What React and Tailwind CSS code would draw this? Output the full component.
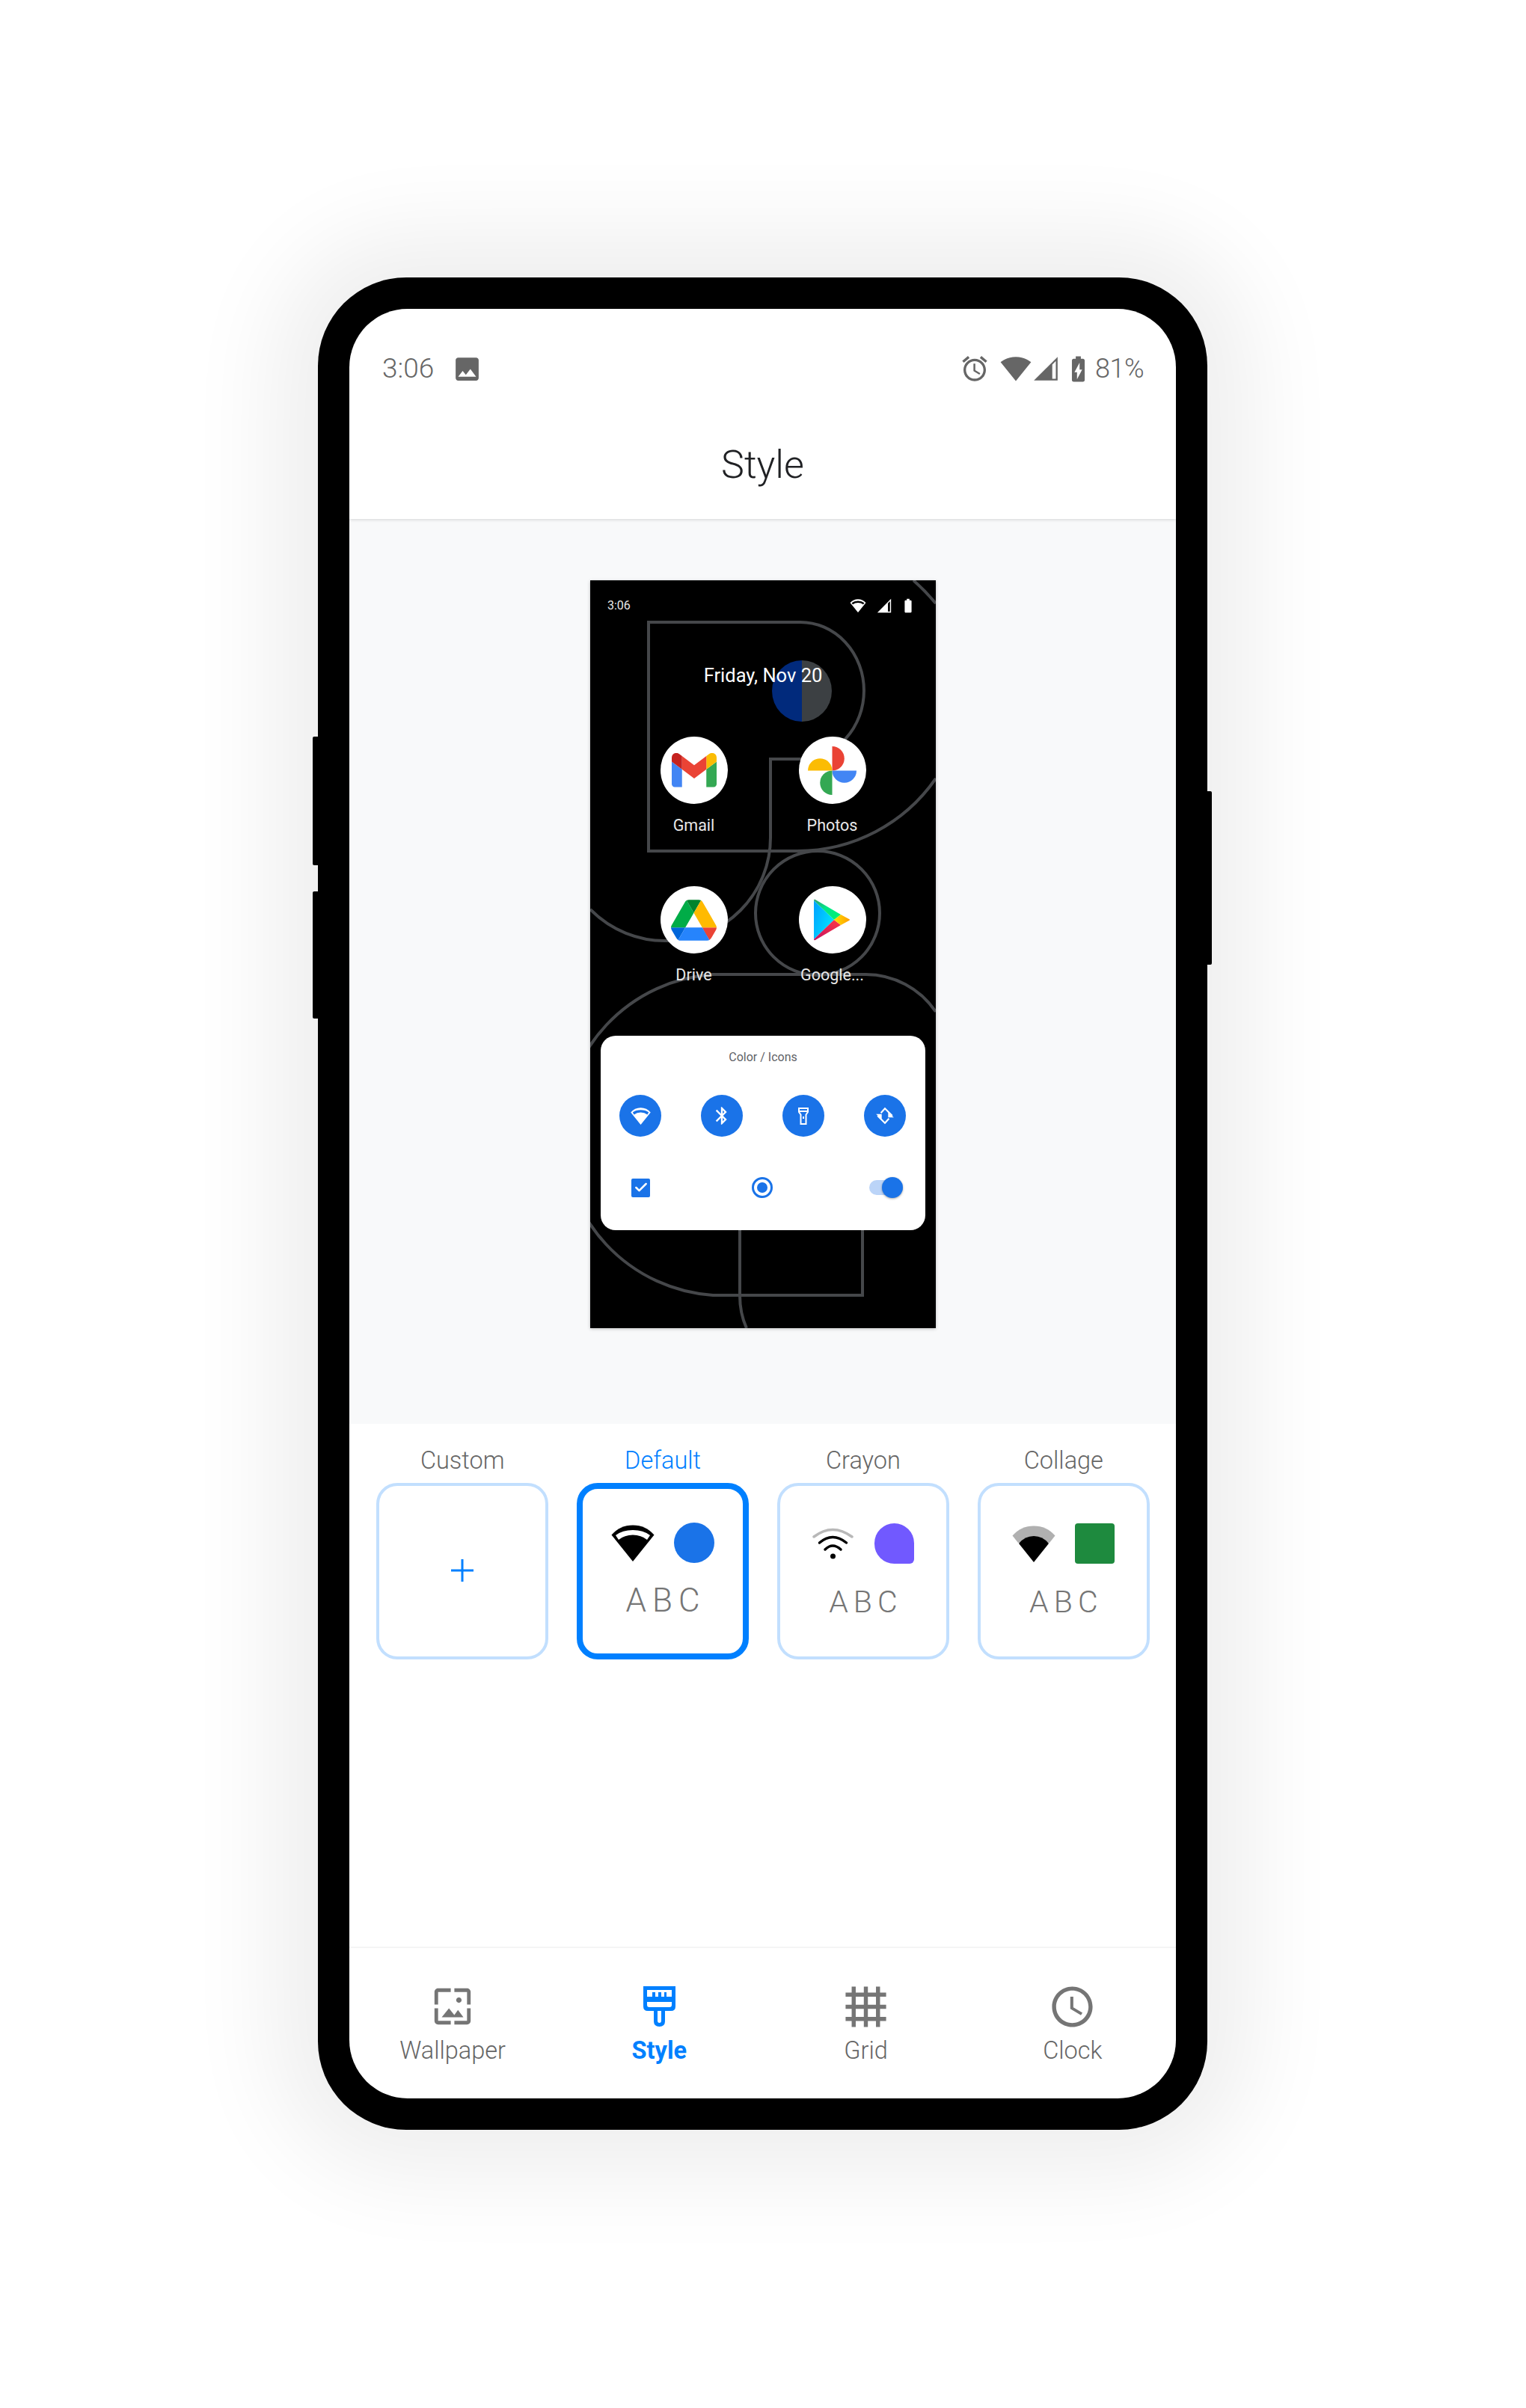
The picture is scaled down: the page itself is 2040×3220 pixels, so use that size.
import { Check } from "lucide-react";

const Wifi = ({ className = "", fill = "#000", cut = "#fff" }) => (
  <svg viewBox="0 0 58 49" className={className}>
    <path fill={fill} d="M29 49 0.5 13.5Q12 0.5 29 0.5Q46 0.5 57.5 13.5Z" />
    <path fill={cut} d="M6 14Q15 7 29 7Q43 7 52 14L48 20Q40 13.5 29 13.5Q18 13.5 10 20Z" />
  </svg>
);

const MdIcon = ({ d, className = "", fill = "currentColor" }) => (
  <svg viewBox="0 0 24 24" className={className} fill={fill}>
    <path d={d} fillRule="evenodd" />
  </svg>
);

const paths = {
  image: "M21 19V5c0-1.1-.9-2-2-2H5c-1.1 0-2 .9-2 2v14c0 1.1.9 2 2 2h14c1.1 0 2-.9 2-2zM8.5 13.5l2.5 3.01L14.5 12l4.5 6H5l3.5-4.5z",
  alarm: "M22 5.72l-4.6-3.86-1.29 1.53 4.6 3.86L22 5.72zM7.88 3.39L6.6 1.86 2 5.71l1.29 1.53 4.59-3.85zM12.5 8H11v6l4.75 2.85.75-1.23-4-2.37V8zM12 4c-4.97 0-9 4.03-9 9s4.02 9 9 9c4.97 0 9-4.03 9-9s-4.03-9-9-9zm0 16c-3.87 0-7-3.13-7-7s3.13-7 7-7 7 3.13 7 7-3.13 7-7 7z",
  wifi: "M12.01 21.49L23.64 7c-.45-.34-4.93-4-11.64-4C5.28 3 .81 6.66.36 7l11.63 14.49.01.01.01-.01z",
  signal: "M22 2L2 22h20V2zM20.5 20.5h-3V8.5l3-3z",
  battery: "M15.67 4H14V2h-4v2H8.33C7.6 4 7 4.6 7 5.33v15.33C7 21.4 7.6 22 8.33 22h7.33c.74 0 1.34-.6 1.34-1.33V5.33C17 4.6 16.4 4 15.67 4zM11 20v-5.5H9L13 7v5.5h2L11 20z",
  batteryFull: "M15.67 4H14V2h-4v2H8.33C7.6 4 7 4.6 7 5.33v15.33C7 21.4 7.6 22 8.33 22h7.33c.74 0 1.34-.6 1.34-1.33V5.33C17 4.6 16.4 4 15.67 4z",
  wallpaper: "M4 4h7V2H4c-1.1 0-2 .9-2 2v7h2V4zm6 9l-4 5h12l-3-4-2.03 2.71L10 13zm7-4.5c0-.83-.67-1.5-1.5-1.5S14 7.67 14 8.5s.67 1.5 1.5 1.5S17 9.33 17 8.5zM20 2h-7v2h7v7h2V4c0-1.1-.9-2-2-2zm0 18h-7v2h7c1.1 0 2-.9 2-2v-7h-2v7zM4 13H2v7c0 1.1.9 2 2 2h7v-2H4v-7z",
  grid: "M22 7V5h-3V2h-2v3h-4V2h-2v3H7V2H5v3H2v2h3v4H2v2h3v4H2v2h3v3h2v-3h4v3h2v-3h4v3h2v-3h3v-2h-3v-4h3v-2h-3V7h3zM7 7h4v4H7V7zm0 10v-4h4v4H7zm10 0h-4v-4h4v4zm0-6h-4V7h4v4z",
  clock: "M11.99 2C6.47 2 2 6.48 2 12s4.47 10 9.99 10C17.52 22 22 17.52 22 12S17.52 2 11.99 2zM12 20c-4.42 0-8-3.58-8-8s3.58-8 8-8 8 3.58 8 8-3.58 8-8 8zm.5-13H11v6l5.25 3.15.75-1.23-4.5-2.67z",
  bluetooth: "M17.71 7.71L12 2h-1v7.59L6.41 5 5 6.41 10.59 12 5 17.59 6.41 19 11 14.41V22h1l5.71-5.71-4.3-4.29 4.3-4.29zM13 5.83l1.88 1.88L13 9.59V5.83zm1.88 10.46L13 18.17v-3.76l1.88 1.88z",
};

const BrushIcon = () => (
  <svg viewBox="0 0 43 54" className="h-[54px] w-[43px]">
    <path
      fill="#0080ff"
      fillRule="evenodd"
      d="M0 0H43V27Q43 33 37 33H29V47Q29 54 21.5 54Q14 54 14 47V33H6Q0 33 0 27ZM5 5V14H12V8H16V14H20V8H24V14H28V8H31V14H38V5ZM5 21V25Q5 28 8 28H35Q38 28 38 25V21ZM19 33V46Q19 49 21.5 49Q24 49 24 46V33Z"
    />
  </svg>
);

const Backdrop = () => (
  <svg viewBox="0 0 462 1000" className="absolute inset-0 h-full w-full" fill="none" stroke="#45474a" strokeWidth="4">
    <path fill="#012a7c" stroke="none" d="M283 107A40 41 0 0 0 283 189Z" />
    <path fill="#3c4043" stroke="none" d="M283 107A40 41 0 0 1 283 189Z" />
    <path d="M432 0Q448 14 462 31" />
    <path d="M281 239A85 91.5 0 0 0 281 56H78V362H277A225 225 0 0 0 462 265" />
    <path d="M281 239H241V344A138 138 0 0 1 104 482A140 140 0 0 1 0 440" />
    <circle cx="304" cy="445" r="83" />
    <path d="M462 577A113 113 0 0 0 368 527H164A215 215 0 0 0 164 956H364V860" />
    <path d="M200 860V956Q200 980 209 1000" />
  </svg>
);

const GmailLogo = () => (
  <svg viewBox="0 0 24 18" className="h-[46px] w-[60px]">
    <path fill="#4285f4" d="M1.6 18H5.5V8.5L0 4.4V16.4C0 17.3.7 18 1.6 18z" />
    <path fill="#34a853" d="M18.5 18h3.9c.9 0 1.6-.7 1.6-1.6V4.4L18.5 8.5z" />
    <path fill="#fbbc04" d="M18.5 1.4V8.5L24 4.4V2.2C24 .2 21.7-1 20.1.2z" />
    <path fill="#ea4335" d="M5.5 8.5V1.4L12 6.3 18.5 1.4V8.5L12 13.4z" />
    <path fill="#c5221f" d="M0 2.2V4.4L5.5 8.5V1.4L3.9.2C2.3-1 0 .2 0 2.2z" />
  </svg>
);

const PhotosLogo = () => (
  <svg viewBox="0 0 66 66" className="h-[65px] w-[65px]">
    <path fill="#ea4335" d="M33 33V0A16.5 16.5 0 0 1 33 33Z" />
    <path fill="#4285f4" d="M33 33H66A16.5 16.5 0 0 1 33 33Z" />
    <path fill="#34a853" d="M33 33V66A16.5 16.5 0 0 1 33 33Z" />
    <path fill="#fbbc04" d="M33 33H0A16.5 16.5 0 0 1 33 33Z" />
  </svg>
);

const DriveLogo = () => (
  <svg viewBox="0 0 87.3 78" className="h-[55px] w-[61px]">
    <path fill="#0066da" d="m6.6 66.85 3.85 6.65c.8 1.4 1.95 2.5 3.3 3.3l13.75-23.8h-27.5c0 1.55.4 3.1 1.2 4.5z" />
    <path fill="#00ac47" d="m43.65 25-13.75-23.8c-1.35.8-2.5 1.9-3.3 3.3l-25.4 44a9.06 9.06 0 0 0 -1.2 4.5h27.5z" />
    <path fill="#ea4335" d="m73.55 76.8c1.35-.8 2.5-1.9 3.3-3.3l1.6-2.75 7.65-13.25c.8-1.4 1.2-2.95 1.2-4.5h-27.502l5.852 11.5z" />
    <path fill="#00832d" d="m43.65 25 13.75-23.8c-1.35-.8-2.9-1.2-4.5-1.2h-18.5c-1.6 0-3.15.45-4.5 1.2z" />
    <path fill="#2684fc" d="m59.8 53h-32.3l-13.75 23.8c1.35.8 2.9 1.2 4.5 1.2h50.8c1.6 0 3.15-.45 4.5-1.2z" />
    <path fill="#ffba00" d="m73.4 26.5-12.7-22c-.8-1.4-1.95-2.5-3.3-3.3l-13.75 23.8 16.15 28h27.45c0-1.55-.4-3.1-1.2-4.5z" />
  </svg>
);

const PlayLogo = () => (
  <svg viewBox="0 0 49 56" className="h-[56px] w-[49px]">
    <defs>
      <linearGradient id="playBlue" x1="0" y1="0" x2="1" y2="0.6">
        <stop offset="0" stopColor="#00a0ff" />
        <stop offset="1" stopColor="#00e3ff" />
      </linearGradient>
      <linearGradient id="playGreen" x1="0" y1="0" x2="1" y2="0.6">
        <stop offset="0" stopColor="#32a071" />
        <stop offset="0.5" stopColor="#00e68a" />
        <stop offset="1" stopColor="#00f076" />
      </linearGradient>
      <linearGradient id="playRed" x1="1" y1="0" x2="0" y2="1">
        <stop offset="0" stopColor="#ff3a44" />
        <stop offset="1" stopColor="#c31162" />
      </linearGradient>
      <linearGradient id="playYellow" x1="0" y1="0" x2="1" y2="0">
        <stop offset="0" stopColor="#ffe000" />
        <stop offset="1" stopColor="#ff9c00" />
      </linearGradient>
    </defs>
    <path fill="url(#playBlue)" d="M0 2V54L27 28Z" />
    <path fill="url(#playGreen)" d="M0 2Q0 0 2 1L36 21L27 28Z" />
    <path fill="url(#playRed)" d="M0 54L27 28L36 35L2 55Q0 56 0 54Z" />
    <path fill="url(#playYellow)" d="M36 21L47 27Q49 28 47 29L36 35L27 28Z" />
  </svg>
);

const App_ = ({ logo, label }) => (
  <div className="flex flex-col items-center">
    <div className="flex h-[90px] w-[90px] items-center justify-center rounded-full bg-white">{logo}</div>
    <span className="mt-[15px] h-[28px] text-[21.5px] leading-[28px] text-[#e8e8e8]">{label}</span>
  </div>
);

const QuickTile = ({ children }) => (
  <div className="flex h-[56px] w-[56px] items-center justify-center rounded-full bg-[#1a73e8]">{children}</div>
);

function StylePreview() {
  return (
    <div className="relative ml-[322px] mt-[81px] flex h-[1000px] w-[462px] flex-col overflow-hidden bg-black shadow-[0_1px_4px_rgba(0,0,0,0.25)]">
      <Backdrop />
      <div className="relative mt-[25px] flex h-[18px] items-center pl-[23px] pr-[26px] text-white">
        <span className="text-[16px] text-[#e8e8e8]">3:06</span>
        <Wifi className="ml-auto h-[18px] w-[22px]" fill="#fff" cut="#000" />
        <MdIcon d={paths.signal} className="ml-[13px] h-[22px] w-[22px]" />
        <MdIcon d={paths.batteryFull} className="ml-[10px] h-[22px] w-[22px]" />
      </div>
      <p className="relative mt-[68px] h-[32px] text-center text-[25.5px] leading-[32px] text-white">Friday, Nov 20</p>
      <div className="relative mt-[66px] grid grid-cols-2 gap-y-[67px] px-[46px]">
        <App_ logo={<GmailLogo />} label="Gmail" />
        <App_ logo={<PhotosLogo />} label="Photos" />
        <App_ logo={<DriveLogo />} label="Drive" />
        <App_ logo={<PlayLogo />} label="Google..." />
      </div>
      <div className="relative mx-[14px] mt-[67px] h-[260px] rounded-[20px] bg-white">
        <p className="mt-[19px] h-[20px] text-center text-[16px] leading-[20px] text-[#5f6368]">Color / Icons</p>
        <div className="mt-[40px] flex gap-[53px] pl-[25px]">
          <QuickTile>
            <Wifi className="h-[23px] w-[27px]" fill="#fff" cut="#1a73e8" />
          </QuickTile>
          <QuickTile>
            <MdIcon d={paths.bluetooth} className="h-[28px] w-[28px] text-white" />
          </QuickTile>
          <QuickTile>
            <svg viewBox="0 0 14 23" className="h-[23px] w-[14px]" fill="none" stroke="#fff" strokeWidth="2">
              <path d="M1 1H13V6L10.5 9.5V22H3.5V9.5L1 6Z" />
              <path d="M1 5H13" />
              <path d="M7 12V15" />
            </svg>
          </QuickTile>
          <QuickTile>
            <svg viewBox="0 0 24 24" className="h-[26px] w-[26px]" fill="#fff">
              <path fill="none" stroke="#fff" strokeWidth="2" d="M7 8.5L12 3L21 12" />
              <path fill="none" stroke="#fff" strokeWidth="2" d="M17 15.5L12 21L3 12" />
              <path d="M1 10H8V16Z" />
              <path d="M23 14H16V8Z" />
            </svg>
          </QuickTile>
        </div>
        <div className="mt-[54px] flex h-[28px] items-center">
          <div className="ml-[41px] flex h-[25px] w-[25px] items-center justify-center rounded-[2px] bg-[#1a73e8]">
            <Check size={20} strokeWidth={3} className="text-white" />
          </div>
          <div className="ml-[136px] flex h-[28px] w-[28px] items-center justify-center rounded-full border-[3px] border-[#1a73e8]">
            <div className="h-[14px] w-[14px] rounded-full bg-[#1a73e8]" />
          </div>
          <div className="relative ml-[129px] h-[20px] w-[45px] rounded-full bg-[#bbd4f8]">
            <div className="absolute right-0 top-[-4px] h-[28px] w-[28px] rounded-full bg-[#1a73e8] shadow-[0_1px_3px_rgba(0,0,0,0.35)]" />
          </div>
        </div>
      </div>
    </div>
  );
}

function OptionCard({ label, active = false, children }) {
  return (
    <div className="flex flex-col items-center">
      <span className={`h-[40px] text-[32.5px] font-light leading-[40px] ${active ? "text-[#0080ff]" : "text-[#666666]"}`}>{label}</span>
      <div
        className={`mt-[10px] flex h-[236px] w-[230px] flex-col items-center rounded-[28px] bg-white ${
          active ? "border-[8px] border-[#0080ff] pt-[45px]" : "border-[4px] border-[#c2dffe] pt-[50px]"
        }`}
      >
        {children}
      </div>
    </div>
  );
}

const NavItem = ({ icon, label, active = false }) => (
  <div className="flex flex-col items-center">
    <div className="flex h-[54px] items-center justify-center">{icon}</div>
    <span className={`mt-[12px] h-[40px] text-[32.5px] leading-[40px] ${active ? "font-bold text-[#0080ff]" : "font-light text-[#666666]"}`}>{label}</span>
  </div>
);

export default function App() {
  return (
    <div className="h-[3220px] w-[2040px] overflow-hidden bg-white pt-[371px] [font-family:Roboto,sans-serif]">
      <div className="relative ml-[425px] h-[2477px] w-[1189px] rounded-[118px] bg-black p-[42px] shadow-[0_0_120px_60px_rgba(0,0,0,0.068)]">
        <div className="absolute left-[-7px] top-[614px] h-[172px] w-[8px] rounded-l-[2px] bg-black" />
        <div className="absolute left-[-7px] top-[821px] h-[170px] w-[8px] rounded-l-[2px] bg-black" />
        <div className="absolute right-[-6px] top-[687px] h-[232px] w-[7px] rounded-r-[2px] bg-black" />

        <div className="flex h-full flex-col overflow-hidden rounded-[78px] bg-white">
          <header className="relative h-[281px] shrink-0 shadow-[0_1px_4px_rgba(0,0,0,0.15)]">
            <div className="flex h-[36px] translate-y-[62px] items-center pl-[44px] pr-[43px] text-[#666666]">
              <span className="text-[37px] font-light leading-[36px]">3:06</span>
              <MdIcon d={paths.image} className="ml-[24px] h-[41px] w-[41px]" />
              <MdIcon d={paths.alarm} className="ml-auto h-[40px] w-[40px]" />
              <MdIcon d={paths.wifi} className="ml-[14px] h-[42px] w-[42px]" />
              <MdIcon d={paths.signal} className="h-[38px] w-[38px]" />
              <MdIcon d={paths.battery} className="ml-[4px] h-[41px] w-[41px]" />
              <span className="ml-[2px] text-[36px] font-light leading-[36px] tracking-[-0.5px]">81%</span>
            </div>
            <h1 className="absolute inset-x-0 top-[174px] text-center text-[52px] font-light leading-[70px] text-[#202124]">Style</h1>
          </header>

          <section className="h-[1210px] shrink-0 bg-[#f8f9fa] pt-px">
            <StylePreview />
          </section>

          <section className="grid grow grid-cols-4 content-start gap-x-[37.5px] pl-[36px] pr-[35px] pt-[29px]">
            <OptionCard label="Custom">
              <svg viewBox="0 0 30 30" className="mt-[48px] h-[30px] w-[30px]" stroke="#0080ff" strokeWidth="3">
                <path d="M15 0V30M0 15H30" />
              </svg>
            </OptionCard>
            <OptionCard label="Default" active>
              <div className="flex items-center gap-[26px]">
                <Wifi className="h-[49px] w-[58px]" />
                <div className="h-[54px] w-[54px] rounded-full bg-[#1a73e8]" />
              </div>
              <p className="mt-[28px] h-[44px] pl-[8px] text-center text-[44px] font-light leading-[44px] tracking-[8px] text-[#757575]">ABC</p>
            </OptionCard>
            <OptionCard label="Crayon">
              <div className="flex items-center gap-[28px]">
                <svg viewBox="0 0 55 45" className="h-[45px] w-[55px]" fill="none" strokeLinecap="round" strokeWidth="3.5">
                  <path stroke="#b8b8b8" d="M2 13Q27-6 53 13" />
                  <path stroke="#000" d="M9.5 21Q27 6 45.5 21" />
                  <path stroke="#000" d="M17 30Q27 20 38 30" />
                  <circle cx="27.5" cy="39" r="3.5" fill="#000" stroke="none" />
                </svg>
                <div className="h-[54px] w-[53px] rounded-[27px] rounded-br-[6px] bg-[#7159ff]" />
              </div>
              <p className="mt-[29px] h-[44px] pl-[7px] text-center text-[41px] font-light leading-[44px] tracking-[7px] text-[#757575]">ABC</p>
            </OptionCard>
            <OptionCard label="Collage">
              <div className="flex items-center gap-[26px]">
                <svg viewBox="0 0 58 49" className="h-[49px] w-[58px]">
                  <path fill="#b0b0b0" d="M0.5 13.5Q12 0.5 29 0.5Q46 0.5 57.5 13.5L50 23H8Z" />
                  <path fill="#000" d="M29 49L9 24Q17 14 29 14Q41 14 49 24Z" />
                </svg>
                <div className="h-[54px] w-[53px] rounded-[4px] bg-[#1e8a3e]" />
              </div>
              <p className="mt-[29px] h-[44px] pl-[7px] text-center text-[41px] font-light leading-[44px] tracking-[7px] text-[#757575]">ABC</p>
            </OptionCard>
          </section>

          <nav className="grid h-[203px] shrink-0 grid-cols-4 border-t-[2px] border-[#f5f5f5] pt-[51px]">
            <NavItem label="Wallpaper" icon={<MdIcon d={paths.wallpaper} className="h-[58px] w-[58px] text-[#757575]" />} />
            <NavItem label="Style" active icon={<BrushIcon />} />
            <NavItem label="Grid" icon={<MdIcon d={paths.grid} className="h-[65px] w-[65px] text-[#757575]" />} />
            <NavItem label="Clock" icon={<MdIcon d={paths.clock} className="h-[65px] w-[65px] text-[#757575]" />} />
          </nav>
        </div>
      </div>
    </div>
  );
}
